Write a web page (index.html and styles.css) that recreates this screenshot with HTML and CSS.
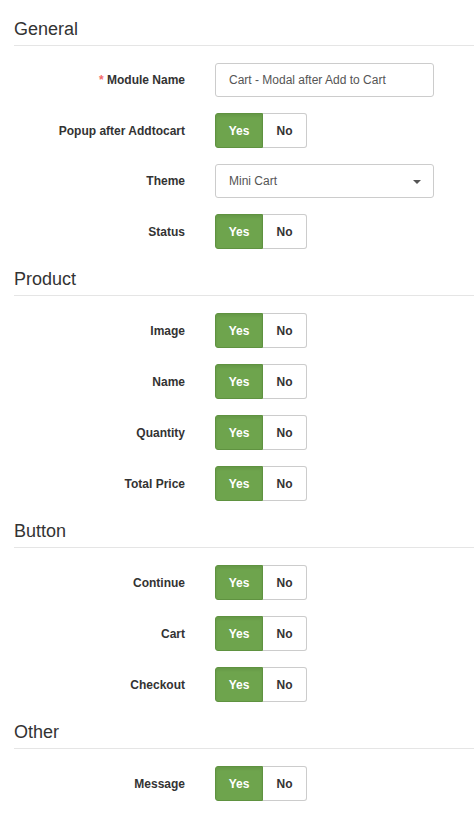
FILE: index.html
```html
<!DOCTYPE html>
<html lang="en">
<head>
<meta charset="utf-8">
<title>Cart - Modal after Add to Cart</title>
<link rel="stylesheet" href="styles.css">
</head>
<body>
<div class="page">
  <section class="section">
    <h2 class="legend">General</h2>
    <div class="rows">
      <div class="row">
        <label class="label"><span class="req">*</span> Module Name</label>
        <div class="field input-box">Cart - Modal after Add to Cart</div>
      </div>
      <div class="row">
        <label class="label">Popup after Addtocart</label>
        <div class="toggle"><span class="opt yes">Yes</span><span class="opt no">No</span></div>
      </div>
      <div class="row">
        <label class="label">Theme</label>
        <div class="field select-box">Mini Cart<svg class="caret" width="8" height="4" viewBox="0 0 8 4"><path d="M0 0h8L4 4z" fill="#555"/></svg></div>
      </div>
      <div class="row">
        <label class="label">Status</label>
        <div class="toggle"><span class="opt yes">Yes</span><span class="opt no">No</span></div>
      </div>
    </div>
  </section>

  <section class="section">
    <h2 class="legend">Product</h2>
    <div class="rows">
      <div class="row">
        <label class="label">Image</label>
        <div class="toggle"><span class="opt yes">Yes</span><span class="opt no">No</span></div>
      </div>
      <div class="row">
        <label class="label">Name</label>
        <div class="toggle"><span class="opt yes">Yes</span><span class="opt no">No</span></div>
      </div>
      <div class="row">
        <label class="label">Quantity</label>
        <div class="toggle"><span class="opt yes">Yes</span><span class="opt no">No</span></div>
      </div>
      <div class="row">
        <label class="label">Total Price</label>
        <div class="toggle"><span class="opt yes">Yes</span><span class="opt no">No</span></div>
      </div>
    </div>
  </section>

  <section class="section">
    <h2 class="legend">Button</h2>
    <div class="rows">
      <div class="row">
        <label class="label">Continue</label>
        <div class="toggle"><span class="opt yes">Yes</span><span class="opt no">No</span></div>
      </div>
      <div class="row">
        <label class="label">Cart</label>
        <div class="toggle"><span class="opt yes">Yes</span><span class="opt no">No</span></div>
      </div>
      <div class="row">
        <label class="label">Checkout</label>
        <div class="toggle"><span class="opt yes">Yes</span><span class="opt no">No</span></div>
      </div>
    </div>
  </section>

  <section class="section">
    <h2 class="legend">Other</h2>
    <div class="rows">
      <div class="row">
        <label class="label">Message</label>
        <div class="toggle"><span class="opt yes">Yes</span><span class="opt no">No</span></div>
      </div>
    </div>
  </section>
</div>
</body>
</html>
```

FILE: styles.css
```css
html, body {
  margin: 0;
  padding: 0;
  background: #fff;
}

body {
  font-family: "Liberation Sans", Helvetica, Arial, sans-serif;
  font-size: 12px;
  color: #333;
}

.page {
  padding: 19px 0 0 14px;
}

.section + .section {
  margin-top: 20px;
}

.legend {
  margin: 0 0 17px 0;
  font-size: 18px;
  font-weight: normal;
  line-height: 20px;
  padding-bottom: 6px;
  border-bottom: 1px solid #e5e5e5;
  color: #333;
}

.rows {
  display: flex;
  flex-direction: column;
  gap: 16px;
}

.row {
  display: flex;
  align-items: center;
}

.label {
  width: 171px;
  margin-right: 30px;
  text-align: right;
  font-weight: bold;
  color: #333;
  flex: none;
}

.req {
  color: #f56b6b;
}

.field {
  box-sizing: border-box;
  width: 219px;
  height: 34px;
  border: 1px solid #ccc;
  border-radius: 3px;
  padding: 0 13px;
  display: flex;
  align-items: center;
  color: #555;
  font-size: 12px;
  background: #fff;
}

.select-box {
  position: relative;
}

.caret {
  position: absolute;
  right: 12px;
  top: 15px;
}

.toggle {
  display: flex;
  height: 35px;
  font-weight: bold;
}

.opt {
  box-sizing: border-box;
  height: 35px;
  display: flex;
  align-items: center;
  justify-content: center;
  font-size: 12px;
}

.yes {
  width: 48px;
  background: #6ea44d;
  color: #fff;
  border: 1px solid #5f9240;
  border-radius: 3px 0 0 3px;
  box-shadow: inset 0 2px 3px rgba(0, 0, 0, 0.08);
}

.no {
  width: 44px;
  background: #fff;
  color: #333;
  border: 1px solid #ccc;
  border-left: 0;
  border-radius: 0 3px 3px 0;
}
```
